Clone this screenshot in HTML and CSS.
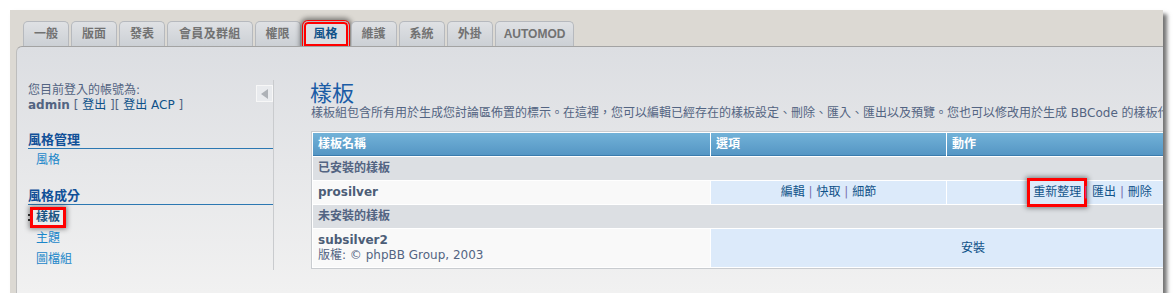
FILE: index.html
```html
<!DOCTYPE html>
<html lang="zh-Hant">
<head>
    <meta charset="UTF-8">
    <meta name="viewport" content="width=device-width, initial-scale=1.0">
    <title>樣板 - 管理員控制台</title>
    <link rel="stylesheet" href="styles.css">
</head>
<body>
    <div class="acp-window">
        <!-- Các tab trên cùng -->
        <ul class="tabs">
            <li class="tab">一般</li>
            <li class="tab">版面</li>
            <li class="tab">發表</li>
            <li class="tab tab-wide">會員及群組</li>
            <li class="tab">權限</li>
            <li class="tab tab-active mark">風格</li>
            <li class="tab">維護</li>
            <li class="tab">系統</li>
            <li class="tab">外掛</li>
            <li class="tab tab-latin">AUTOMOD</li>
        </ul>

        <div class="panel">
            <!-- Menu bên trái -->
            <div class="menu">
                <div class="user-box">
                    <p>您目前登入的帳號為:<br><strong>admin</strong> [ <a href="#">登出</a> ][ <a href="#">登出 ACP</a> ]</p>
                    <span class="toggle"></span>
                </div>
                <h3 class="menu-header">風格管理</h3>
                <ul class="menu-list">
                    <li><a href="#">風格</a></li>
                </ul>
                <h3 class="menu-header">風格成分</h3>
                <ul class="menu-list menu-list-last">
                    <li class="active"><a class="mark" href="#">樣板</a></li>
                    <li><a href="#">主題</a></li>
                    <li><a href="#">圖檔組</a></li>
                </ul>
            </div>

            <!-- Nội dung chính -->
            <div class="main">
                <h1>樣板</h1>
                <p class="explain">樣板組包含所有用於生成您討論區佈置的標示。在這裡，您可以編輯已經存在的樣板設定、刪除、匯入、匯出以及預覽。您也可以修改用於生成 BBCode 的樣板代碼。</p>

                <table class="styles-table">
                    <thead>
                        <tr>
                            <th class="col-name">樣板名稱</th>
                            <th class="col-opt">選項</th>
                            <th class="col-act">動作</th>
                        </tr>
                    </thead>
                    <tbody>
                        <tr class="row-section">
                            <td colspan="3">已安裝的樣板</td>
                        </tr>
                        <tr>
                            <td class="cell-name"><strong class="style-name">prosilver</strong></td>
                            <td class="cell-links">
                                <a href="#">編輯</a> <span class="sep">|</span> <a href="#">快取</a> <span class="sep">|</span> <a href="#">細節</a>
                            </td>
                            <td class="cell-links">
                                <a class="mark" href="#">重新整理</a><span class="sep">|</span> <a href="#">匯出</a> <span class="sep">|</span> <a href="#">刪除</a>
                            </td>
                        </tr>
                        <tr class="row-section">
                            <td colspan="3">未安裝的樣板</td>
                        </tr>
                        <tr>
                            <td class="cell-name">
                                <strong class="style-name">subsilver2</strong><br>
                                版權: © phpBB Group, 2003
                            </td>
                            <td class="cell-links" colspan="2"><a href="#">安裝</a></td>
                        </tr>
                    </tbody>
                </table>
            </div>
        </div>
    </div>
</body>
</html>
```

FILE: styles.css
```css
/* Reset */
* {
    margin: 0;
    padding: 0;
    box-sizing: border-box;
}

body {
    background: #fff;
    font-family: "DejaVu Sans", "Noto Sans CJK TC", sans-serif;
    font-size: 12px;
    color: #536482;
}

a {
    color: #105289;
    text-decoration: none;
}

/* Khung cửa sổ */
.acp-window {
    margin: 10px 0 0 10px;
    width: 1153px;
    height: 283px;
    background: #dcd9d3;
    box-shadow: 4px 4px 4px rgba(0, 0, 0, 0.55);
    overflow: hidden;
    display: flex;
    flex-direction: column;
}

/* Tabs */
.tabs {
    list-style: none;
    display: flex;
    gap: 2px;
    height: 36px;
    padding: 11px 0 0 13px;
    flex: none;
}

.tab {
    height: 25px;
    padding: 0 10px;
    border: 1px solid #b6b9be;
    border-bottom: none;
    border-radius: 5px 5px 0 0;
    background: linear-gradient(#dfe1e4, #ccd0d5);
    font-family: "Liberation Sans", "Noto Sans CJK TC", sans-serif;
    font-weight: bold;
    font-size: 12px;
    line-height: 24px;
    color: #727272;
}

.tab-wide {
    padding: 0 11px;
    letter-spacing: 0.3px;
}

.tab-latin {
    padding: 0 8px;
}

.tab-active {
    background: #dcdee2;
    color: #105289;
}

/* Khung đỏ đánh dấu */
.mark {
    box-shadow: 0 0 0 3px #f00, 0 0 5px 4px rgba(0, 0, 0, 0.45);
}

.tab.mark {
    box-shadow: inset 0 0 0 2px #f00, 0 0 0 1px #f00, 0 0 5px 3px rgba(0, 0, 0, 0.45);
}

/* Panel nội dung */
.panel {
    flex: 1;
    margin-left: 6px;
    padding: 33px 0 0 11px;
    border-top: 1px solid #a3a3a3;
    border-left: 1px solid #bdbdbd;
    border-top-left-radius: 6px;
    background: linear-gradient(#dcdee2, #f1f1f1);
    display: flex;
    align-items: flex-start;
}

/* Menu */
.menu {
    flex: none;
    width: 246px;
    border-right: 1px solid #c9cbce;
}

.user-box {
    display: flex;
    justify-content: space-between;
    padding-top: 3px;
    margin-bottom: 19px;
    line-height: 15px;
}

.user-box strong {
    color: #536482;
}

.toggle {
    flex: none;
    width: 17px;
    height: 17px;
    margin-top: 2px;
    background: #e9ebee;
    border: 1px solid #f7f7f7;
    display: flex;
    align-items: center;
    justify-content: center;
}

.toggle::before {
    content: "";
    border-top: 5px solid transparent;
    border-bottom: 5px solid transparent;
    border-right: 7px solid #aeb2b7;
}

.menu-header {
    font-size: 13px;
    line-height: 16px;
    color: #115098;
    border-bottom: 1px solid #2c78b2;
}

.menu-list {
    list-style: none;
    padding: 1px 0 0 8px;
    margin-bottom: 17px;
    line-height: 21px;
}

.menu-list a {
    color: #1b86c9;
}

.menu-list-last {
    padding-top: 2px;
    margin-bottom: 0;
}

.menu-list li.active {
    margin-left: -8px;
}

.menu-list li.active::before {
    content: "";
    display: inline-block;
    width: 2px;
    height: 7px;
    margin-right: 3px;
    vertical-align: middle;
    background: linear-gradient(#333 0 2px, transparent 2px 5px, #333 5px 7px);
}

.menu-list a.mark {
    display: inline-block;
    padding: 0 3px;
    line-height: 15px;
    vertical-align: middle;
    color: #1c5683;
    font-weight: bold;
}

/* Nội dung chính */
.main {
    flex: none;
    width: 940px;
    margin-left: 36px;
}

.main h1 {
    margin-top: 2px;
    font-size: 22px;
    line-height: 24px;
    font-weight: normal;
    color: #1a5ca6;
}

.explain {
    padding-left: 1px;
    line-height: 15px;
    white-space: nowrap;
}

/* Bảng */
.styles-table {
    margin: 10px 0 0 1px;
    width: 926px;
    table-layout: fixed;
    border-collapse: separate;
    border-spacing: 1px;
    border: 1px solid #c9ccd0;
    background: #fff;
}

.styles-table th {
    padding: 4px 5px 3px;
    border-bottom: 1px solid #3b7cad;
    background: linear-gradient(#72b2d8, #5596c4);
    color: #fff;
    font-weight: bold;
    text-align: left;
    line-height: 15px;
}

.col-name { width: 397px; }
.col-opt { width: 235px; }
.col-act { width: 288px; }

.styles-table td {
    padding: 4px 5px;
    line-height: 15px;
}

.row-section td {
    background: #dcdfe3;
    font-weight: bold;
}

.cell-name {
    background: #f9f9f9;
}

.style-name {
    color: #4c5d77;
}

.cell-links {
    background: #dceafa;
    text-align: center;
}

.cell-links .sep {
    color: #7a72b0;
}

.cell-links a.mark {
    display: inline-block;
    padding: 4px 3px;
    margin: -4px 0;
}
```
